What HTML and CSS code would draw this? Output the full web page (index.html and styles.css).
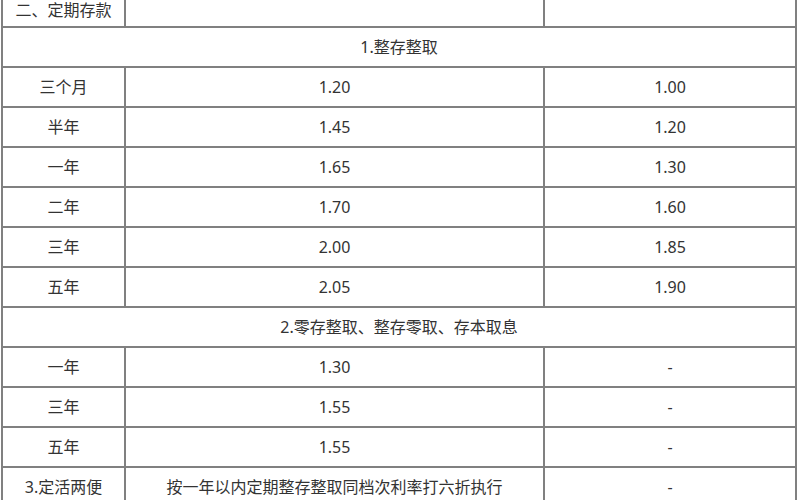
FILE: index.html
```html
<!DOCTYPE html>
<html lang="zh-CN">
<head>
<meta charset="utf-8">
<title>存款利率表</title>
<link rel="stylesheet" href="styles.css">
</head>
<body>
<table class="rates">
  <colgroup>
    <col class="c1">
    <col class="c2">
    <col class="c3">
  </colgroup>
  <tbody>
    <tr class="first"><td>二、定期存款</td><td></td><td></td></tr>
    <tr><td colspan="3">1.整存整取</td></tr>
    <tr><td>三个月</td><td>1.20</td><td>1.00</td></tr>
    <tr><td>半年</td><td>1.45</td><td>1.20</td></tr>
    <tr><td>一年</td><td>1.65</td><td>1.30</td></tr>
    <tr><td>二年</td><td>1.70</td><td>1.60</td></tr>
    <tr><td>三年</td><td>2.00</td><td>1.85</td></tr>
    <tr><td>五年</td><td>2.05</td><td>1.90</td></tr>
    <tr><td colspan="3">2.零存整取、整存零取、存本取息</td></tr>
    <tr><td>一年</td><td>1.30</td><td>-</td></tr>
    <tr><td>三年</td><td>1.55</td><td>-</td></tr>
    <tr><td>五年</td><td>1.55</td><td>-</td></tr>
    <tr><td>3.定活两便</td><td>按一年以内定期整存整取同档次利率打六折执行</td><td>-</td></tr>
  </tbody>
</table>
</body>
</html>
```
FILE: styles.css
```css
html, body {
  margin: 0;
  padding: 0;
  background: #ffffff;
  overflow: hidden;
}
body {
  width: 800px;
  height: 500px;
}
.rates {
  margin: -8px 0 0 1px;
  width: 796px;
  table-layout: fixed;
  border-collapse: separate;
  border-spacing: 0;
  border: 1px solid #808080;
  font-family: "Noto Sans", "Noto Sans CJK SC", sans-serif;
  font-size: 16px;
  color: #333333;
}
.c1 { width: 123px; }
.c2 { width: 419px; }
.rates td {
  border: 1px solid #808080;
  height: 40px;
  padding: 0;
  text-align: center;
  vertical-align: middle;
  line-height: 20px;
  box-sizing: border-box;
}
.rates .first td {
  height: 34px;
}
```
